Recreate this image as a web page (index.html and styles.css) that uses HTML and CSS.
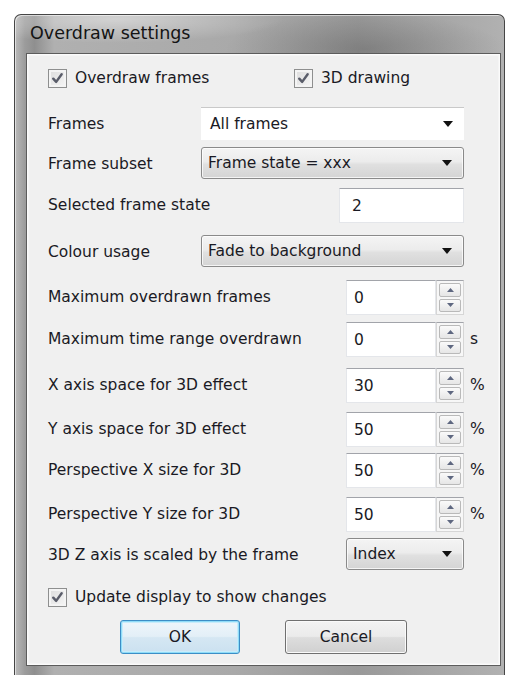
FILE: index.html
```html
<!DOCTYPE html>
<html lang="en">
<head>
<meta charset="utf-8">
<title>Overdraw settings</title>
<link rel="stylesheet" href="styles.css">
</head>
<body>
<div class="window">
  <div class="titlebar"><span class="title">Overdraw settings</span></div>
  <div class="client">
    <div class="checks">
      <label class="check">
        <span class="box"><svg viewBox="0 0 18 18"><path d="M4.5 9.2 L7.6 12.6 L13.4 4.6"/></svg></span>
        <span>Overdraw frames</span>
      </label>
      <label class="check">
        <span class="box"><svg viewBox="0 0 18 18"><path d="M4.5 9.2 L7.6 12.6 L13.4 4.6"/></svg></span>
        <span>3D drawing</span>
      </label>
    </div>

    <div class="form">
      <span class="label">Frames</span>
      <div class="combo flat span-wide">
        <span>All frames</span>
        <svg class="arrow" viewBox="0 0 10 6"><path d="M0 0 H10 L5 6 Z"/></svg>
      </div>

      <span class="label">Frame subset</span>
      <div class="combo span-wide">
        <span>Frame state = xxx</span>
        <svg class="arrow" viewBox="0 0 10 6"><path d="M0 0 H10 L5 6 Z"/></svg>
      </div>

      <span class="label">Selected frame state</span>
      <div class="field field-wide">2</div>

      <span class="label">Colour usage</span>
      <div class="combo span-wide">
        <span>Fade to background</span>
        <svg class="arrow" viewBox="0 0 10 6"><path d="M0 0 H10 L5 6 Z"/></svg>
      </div>

      <span class="label">Maximum overdrawn frames</span>
      <div class="field">0</div>
      <div class="spin"><span class="sb"><svg viewBox="0 0 7 4"><path d="M0 4 H7 L3.5 0 Z"/></svg></span><span class="sb"><svg viewBox="0 0 7 4"><path d="M0 0 H7 L3.5 4 Z"/></svg></span></div>

      <span class="label">Maximum time range overdrawn</span>
      <div class="field">0</div>
      <div class="spin"><span class="sb"><svg viewBox="0 0 7 4"><path d="M0 4 H7 L3.5 0 Z"/></svg></span><span class="sb"><svg viewBox="0 0 7 4"><path d="M0 0 H7 L3.5 4 Z"/></svg></span></div>
      <span class="unit">s</span>

      <span class="label">X axis space for 3D effect</span>
      <div class="field">30</div>
      <div class="spin"><span class="sb"><svg viewBox="0 0 7 4"><path d="M0 4 H7 L3.5 0 Z"/></svg></span><span class="sb"><svg viewBox="0 0 7 4"><path d="M0 0 H7 L3.5 4 Z"/></svg></span></div>
      <span class="unit">%</span>

      <span class="label">Y axis space for 3D effect</span>
      <div class="field">50</div>
      <div class="spin"><span class="sb"><svg viewBox="0 0 7 4"><path d="M0 4 H7 L3.5 0 Z"/></svg></span><span class="sb"><svg viewBox="0 0 7 4"><path d="M0 0 H7 L3.5 4 Z"/></svg></span></div>
      <span class="unit">%</span>

      <span class="label">Perspective X size for 3D</span>
      <div class="field">50</div>
      <div class="spin"><span class="sb"><svg viewBox="0 0 7 4"><path d="M0 4 H7 L3.5 0 Z"/></svg></span><span class="sb"><svg viewBox="0 0 7 4"><path d="M0 0 H7 L3.5 4 Z"/></svg></span></div>
      <span class="unit">%</span>

      <span class="label">Perspective Y size for 3D</span>
      <div class="field">50</div>
      <div class="spin"><span class="sb"><svg viewBox="0 0 7 4"><path d="M0 4 H7 L3.5 0 Z"/></svg></span><span class="sb"><svg viewBox="0 0 7 4"><path d="M0 0 H7 L3.5 4 Z"/></svg></span></div>
      <span class="unit">%</span>

      <span class="label">3D Z axis is scaled by the frame</span>
      <div class="combo span-narrow">
        <span>Index</span>
        <svg class="arrow" viewBox="0 0 10 6"><path d="M0 0 H10 L5 6 Z"/></svg>
      </div>
    </div>

    <label class="check update">
      <span class="box"><svg viewBox="0 0 18 18"><path d="M4.5 9.2 L7.6 12.6 L13.4 4.6"/></svg></span>
      <span>Update display to show changes</span>
    </label>

    <div class="buttons">
      <button class="btn btn-default">OK</button>
      <button class="btn btn-cancel">Cancel</button>
    </div>
  </div>
</div>
</body>
</html>
```

FILE: styles.css
```css
* {
  box-sizing: border-box;
}

html, body {
  margin: 0;
  background: #ffffff;
}

body {
  padding: 14px 0 0 14px;
  font-family: "DejaVu Sans", Verdana, sans-serif;
  font-size: 15.5px;
  color: #1a1a24;
}

/* Aero-style window frame */
.window {
  width: 491px;
  height: 661px;
  border: 1px solid #454545;
  border-bottom: none;
  border-radius: 7px 7px 0 0;
  padding: 0 3px 9px 11px;
  display: flex;
  flex-direction: column;
  background:
    radial-gradient(ellipse 170px 24px at 100px 4px, rgba(255, 255, 255, 0.45), rgba(255, 255, 255, 0)),
    radial-gradient(ellipse 140px 36px at 350px 34px, rgba(60, 60, 60, 0.28), rgba(60, 60, 60, 0)),
    linear-gradient(to right, #b9b9b9 0%, #9c9c9c 2%, #8f8f8f 4%, #b0b0b0 8%, #a9a9a9 45%, #999999 70%, #b1b1b1 100%);
  box-shadow: inset 1px 1px 0 rgba(255, 255, 255, 0.55);
}

.titlebar {
  height: 38px;
  flex: none;
  display: flex;
  align-items: center;
  padding: 0 0 3px 4px;
}

.title {
  font-size: 17.5px;
  color: #141414;
}

/* dialog body */
.client {
  flex: 1;
  border: 1px solid #5c5c5c;
  background: #f0f0f0;
  box-shadow: inset 0 0 0 1px #fbfbfb, inset 0 0 0 2px #f5f5f5;
  padding: 15px 0 0 21px;
  display: flex;
  flex-direction: column;
}

.checks {
  display: grid;
  grid-template-columns: 246px auto;
  height: 19px;
}

.check {
  display: flex;
  align-items: center;
  gap: 8px;
  line-height: 19px;
}

.box {
  width: 19px;
  height: 19px;
  flex: none;
  border: 1px solid #8e8f8f;
  background: linear-gradient(135deg, #dcdcdc, #f6f6f6);
  box-shadow: inset 0 0 0 2px #f4f4f4;
  display: flex;
  align-items: center;
  justify-content: center;
}

.box svg {
  width: 17px;
  height: 17px;
}

.box path {
  fill: none;
  stroke: #5a5d6a;
  stroke-width: 2.6;
  stroke-linecap: round;
  stroke-linejoin: round;
}

/* label / control grid */
.form {
  margin-top: 19px;
  display: grid;
  grid-template-columns: 153px 145px 90px 28px auto;
  grid-template-rows: 40px 41px 47px 45px 42px 46px 44px 41px 44px 41px 32px;
  align-items: start;
}

.label {
  grid-column: 1;
  height: 34px;
  display: flex;
  align-items: center;
  white-space: nowrap;
}

.combo {
  height: 32px;
  display: flex;
  align-items: center;
  justify-content: space-between;
  padding: 0 11px 0 6px;
  border: 1px solid #8a8a8a;
  border-radius: 3px;
  background: linear-gradient(to bottom, #f4f4f4 0%, #ececec 45%, #e0e0e0 55%, #d4d4d4 100%);
  box-shadow: inset 0 0 0 1px rgba(255, 255, 255, 0.75);
}

.combo.flat {
  height: 33px;
  border: none;
  border-top: 1px solid #c9c9c9;
  border-radius: 0;
  background: #ffffff;
  box-shadow: none;
  padding-left: 9px;
}

.span-wide {
  grid-column: 2 / 5;
}

.span-narrow {
  grid-column: 3 / 5;
}

.arrow {
  width: 10px;
  height: 6px;
  fill: #111111;
}

.field {
  grid-column: 3;
  height: 35px;
  display: flex;
  align-items: center;
  padding-left: 7px;
  background: #ffffff;
  border: 1px solid #e4e6ea;
  border-top-color: #a2a4aa;
}

.field-wide {
  grid-column: 3 / 5;
  margin-left: -7px;
  padding-left: 12px;
}

.spin {
  grid-column: 4;
  height: 35px;
  display: flex;
  flex-direction: column;
  gap: 2px;
  padding: 2px;
  background: #f7f7f7;
  border: 1px solid #d6d6d6;
  border-top-color: #a2a4aa;
}

.sb {
  flex: 1;
  display: flex;
  align-items: center;
  justify-content: center;
  border: 1px solid #b9b9b9;
  border-radius: 2px;
  background: linear-gradient(to bottom, #fafafa, #e6e6e6);
}

.sb svg {
  width: 7px;
  height: 4px;
  fill: #5e6780;
}

.unit {
  grid-column: 5;
  height: 34px;
  display: flex;
  align-items: center;
  padding-left: 6px;
}

.update {
  margin-top: 18px;
}

.buttons {
  margin-top: 13px;
  padding-left: 72px;
  display: flex;
  gap: 45px;
}

.btn {
  height: 34px;
  font-family: inherit;
  font-size: 15.5px;
  color: #1a1a24;
  border-radius: 3px;
  padding: 0;
}

.btn-default {
  width: 120px;
  border: 1px solid #3c8ec6;
  background: linear-gradient(to bottom, #eef6fb 0%, #e3eff7 48%, #d5e7f3 52%, #cbe1f0 100%);
  box-shadow: inset 0 0 0 1px #8fdcf8, inset 0 0 0 2px #c8ecfb;
}

.btn-cancel {
  width: 122px;
  border: 1px solid #707070;
  background: linear-gradient(to bottom, #f3f3f3 0%, #ebebeb 48%, #dddddd 52%, #d0d0d0 100%);
  box-shadow: inset 0 0 0 1px #fafafa;
}
```
